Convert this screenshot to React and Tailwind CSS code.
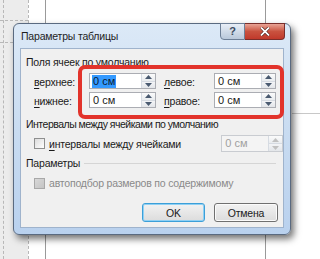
import React from "react";

const font = { fontFamily: '"Liberation Sans", Arial, sans-serif' };
const txt = "text-[10.5px] tracking-[-0.2px] leading-[14px]";

function Spinner({ disabled }) {
  const arrow = disabled ? "#c0c0c0" : "#4a5a70";
  return (
    <div className="flex h-full w-[14px] flex-col border-l border-[#d6dbe2]">
      <div className="flex flex-1 items-center justify-center border-b border-[#d6dbe2] bg-gradient-to-b from-[#fbfbfb] to-[#e9ecef]">
        <svg width="7" height="4" viewBox="0 0 7 4">
          <path d="M0 4 L3.5 0 L7 4 Z" fill={arrow} />
        </svg>
      </div>
      <div className="flex flex-1 items-center justify-center bg-gradient-to-b from-[#f3f4f6] to-[#e3e6ea]">
        <svg width="7" height="4" viewBox="0 0 7 4">
          <path d="M0 0 L3.5 4 L7 0 Z" fill={arrow} />
        </svg>
      </div>
    </div>
  );
}

function Field({ width, selected, disabled, h = "h-[16px]" }) {
  return (
    <div
      className={`flex ${h} ${width} items-stretch border ${
        disabled ? "border-[#c9ccd1] bg-[#f4f4f4]" : "border-[#abadb3] bg-white"
      }`}
    >
      <div className="flex flex-1 items-center pl-[2px]">
        <span
          className={`px-[1px] text-[11px] leading-[13px] ${
            selected
              ? "bg-[#3399ff] text-[#0a1a33]"
              : disabled
              ? "text-[#a0a0a0]"
              : "text-[#1a1a1a]"
          }`}
        >
          0 см
        </span>
      </div>
      <Spinner disabled={disabled} />
    </div>
  );
}

function Check({ disabled }) {
  return (
    <div
      className={`h-[11px] w-[11px] border ${
        disabled
          ? "border-[#a8a8a8] bg-gradient-to-br from-[#d8d8d8] to-[#c4c4c4]"
          : "border-[#8e8f8f] bg-gradient-to-br from-[#dcdcdc] to-[#ffffff]"
      }`}
    />
  );
}

function Label({ first, rest }) {
  return (
    <span className={`${txt} text-[#1a1a1a]`}>
      <span className="underline decoration-[#1a1a1a] underline-offset-2">{first}</span>
      {rest}
    </span>
  );
}

export default function App() {
  return (
    <div className="relative h-[259px] w-[320px] overflow-hidden bg-white" style={font}>
      {/* document behind the dialog */}
      <div className="absolute left-0 top-0 h-full w-[28px] bg-[#ececec]" />
      <div className="absolute left-[3px] top-0 h-full border-l border-dashed border-[#b8b8b8]" />
      <div className="absolute left-[28px] top-0 h-full border-l border-dashed border-[#b8b8b8]" />
      <div className="absolute left-0 top-[20px] w-[28px] border-t border-dashed border-[#b8b8b8]" />
      <div className="absolute left-0 top-[42px] w-[28px] border-t border-dashed border-[#b8b8b8]" />
      <div className="absolute left-[45px] top-0 h-full border-l border-[#9a9a9a]" />
      <div className="absolute left-[265px] top-0 h-full border-l border-[#9a9a9a]" />
      <div className="absolute left-[292px] top-[113px] w-[28px] border-t border-[#c8c8c8]" />

      {/* dialog window */}
      <div className="absolute left-[13px] top-[23px] flex h-[212px] w-[278px] flex-col rounded-[6px] border border-[#5a6a80] bg-gradient-to-b from-[#dce9f7] via-[#c9dcf1] to-[#b9d1ee] px-[6px] pb-[6px] shadow-[3px_4px_7px_rgba(0,0,0,0.55)]">
        <div className="relative flex h-[24px] items-center">
          <span className={`pl-[1px] text-[#1e1e1e] ${txt}`}>Параметры таблицы</span>
          <div className="absolute right-[-1px] top-[-1px] flex">
            <div className="flex h-[17px] w-[25px] items-center justify-center rounded-bl-[4px] border border-[#6d7f96] bg-gradient-to-b from-[#e8eef6] to-[#b9c8da]">
              <span className="text-[11px] font-bold leading-none text-[#3c4b60]">?</span>
            </div>
            <div className="flex h-[17px] w-[40px] items-center justify-center rounded-br-[4px] border border-l-0 border-[#7a2e2a] bg-gradient-to-b from-[#e8a395] via-[#c9523f] to-[#c0392b]">
              <svg width="10" height="9" viewBox="0 0 10 9">
                <path d="M1 0.5 L9 8.5 M9 0.5 L1 8.5" stroke="#3a1410" strokeWidth="3" />
                <path d="M1 0.5 L9 8.5 M9 0.5 L1 8.5" stroke="#ffffff" strokeWidth="1.8" />
              </svg>
            </div>
          </div>
        </div>

        <div className="flex flex-1 flex-col border border-[#9fb3cc] bg-[#f0f0f0] pl-[5px] pt-[6px]">
          <div className={`h-[14px] text-[#1a1a1a] ${txt}`}>Поля ячеек по умолчанию</div>

          <div className="mt-[4px] flex h-[16px] items-center pl-[8px]">
            <div className="w-[55px]"><Label first="в" rest="ерхнее:" /></div>
            <Field width="w-[67px]" selected />
            <div className="ml-[8px] w-[50px]"><Label first="л" rest="евое:" /></div>
            <Field width="w-[62px]" />
          </div>
          <div className="mt-[3px] flex h-[16px] items-center pl-[8px]">
            <div className="w-[55px]"><Label first="н" rest="ижнее:" /></div>
            <Field width="w-[67px]" />
            <div className="ml-[8px] w-[50px]"><Label first="п" rest="равое:" /></div>
            <Field width="w-[62px]" />
          </div>

          <div className="mt-[9px] h-[14px] text-[10.5px] leading-[14px] tracking-[-0.5px] text-[#1a1a1a]">Интервалы между ячейками по умолчанию</div>

          <div className="mt-[4px] flex h-[17px] items-center pl-[8px]">
            <Check />
            <span className={`ml-[4px] w-[173px] text-[#1a1a1a] ${txt}`}>
              <span className="underline underline-offset-2">и</span>нтервалы между ячейками
            </span>
            <Field width="w-[62px]" h="h-[17px]" disabled />
          </div>

          <div className="mt-[4px] flex h-[14px] items-center pr-[7px]">
            <span className={`text-[#1a1a1a] ${txt}`}>Параметры</span>
            <div className="ml-[4px] flex-1 border-t border-[#d5d5d5]" />
          </div>

          <div className="mt-[6px] flex h-[14px] items-center pl-[8px]">
            <Check disabled />
            <span className={`ml-[4px] text-[#8a8a8a] ${txt}`}>автоподбор размеров по содержимому</span>
          </div>

          <div className="mt-[13px] flex justify-end gap-[9px] pr-[5px]">
            <div className={`flex h-[19px] w-[63px] items-center justify-center rounded-[3px] border border-[#3c9fd8] bg-gradient-to-b from-[#f2f2f2] to-[#dcdcdc] text-[#1a1a1a] shadow-[inset_0_0_0_1px_#8fd0f4] ${txt}`}>
              OK
            </div>
            <div className={`flex h-[19px] w-[64px] items-center justify-center rounded-[3px] border border-[#707070] bg-gradient-to-b from-[#f2f2f2] to-[#dcdcdc] text-[#1a1a1a] shadow-[inset_0_0_0_1px_#fbfbfb] ${txt}`}>
              Отмена
            </div>
          </div>
        </div>
      </div>

      {/* red highlight annotation */}
      <div className="absolute left-[78px] top-[65px] h-[54px] w-[206px] rounded-[7px] border-[4px] border-[#e2332b]" />
    </div>
  );
}
